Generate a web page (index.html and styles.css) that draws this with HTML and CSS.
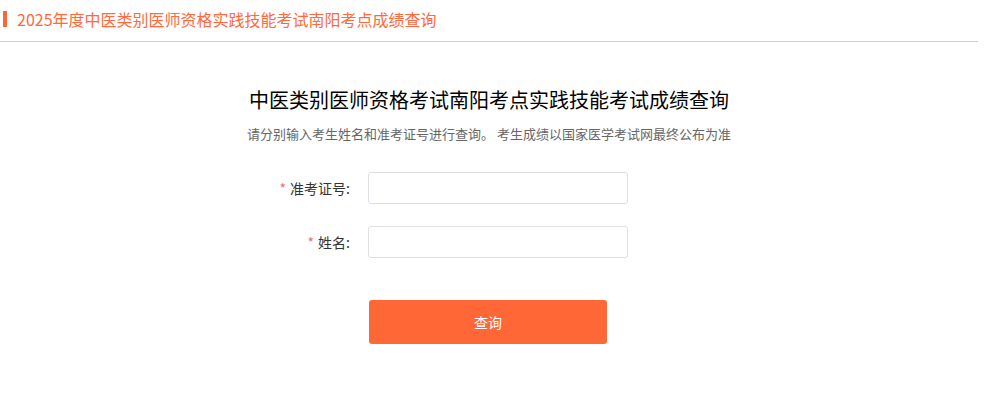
FILE: index.html
```html
<!DOCTYPE html>
<html lang="zh-CN">
<head>
<meta charset="utf-8">
<title>成绩查询</title>
<link rel="stylesheet" href="styles.css">
</head>
<body>
<div class="page">
  <header class="topbar">
    <span class="topbar-mark"></span>
    <h1 class="topbar-title">2025年度中医类别医师资格实践技能考试南阳考点成绩查询</h1>
  </header>
  <main class="main">
    <h2 class="heading">中医类别医师资格考试南阳考点实践技能考试成绩查询</h2>
    <p class="subtitle">请分别输入考生姓名和准考证号进行查询。 考生成绩以国家医学考试网最终公布为准</p>
    <form class="form">
      <div class="row">
        <label class="label"><span class="req">*</span>准考证号:</label>
        <input class="input" type="text">
      </div>
      <div class="row">
        <label class="label"><span class="req">*</span>姓名:</label>
        <input class="input" type="text">
      </div>
      <div class="actions">
        <button class="btn" type="button">查询</button>
      </div>
    </form>
  </main>
</div>
</body>
</html>
```
FILE: styles.css
```css
* { box-sizing: border-box; }
html, body { margin: 0; padding: 0; background: #fff; }
body {
  font-family: "Noto Sans CJK SC", "Liberation Sans", sans-serif;
  color: #333;
}
.page { width: 978px; }
.topbar {
  display: flex;
  align-items: center;
  height: 42px;
  border-bottom: 1px solid #d0d0d0;
  padding-bottom: 3px;
}
.topbar-mark {
  width: 4px;
  height: 16px;
  margin-left: 3px;
  background: #ff6633;
}
.topbar-title {
  margin: 0 0 0 10px;
  font-size: 16px;
  font-weight: normal;
  color: #ff6a3d;
  line-height: 20px;
}
.main { padding-top: 44px; }
.heading {
  margin: 0;
  text-align: center;
  font-size: 20px;
  font-weight: normal;
  color: #000;
  line-height: 28px;
}
.subtitle {
  margin: 11px 0 0;
  text-align: center;
  font-size: 13px;
  color: #666;
  line-height: 18px;
}
.form {
  width: 500px;
  margin: 29px auto 0;
}
.row {
  display: flex;
  align-items: center;
  margin-bottom: 22px;
}
.label {
  width: 129px;
  padding-right: 18px;
  text-align: right;
  font-size: 14px;
  color: #333;
}
.req { color: #f56c6c; margin-right: 4px; }
.input {
  width: 260px;
  height: 32px;
  border: 1px solid #dcdfe6;
  border-radius: 3px;
  outline: none;
  padding: 0 10px;
  font: inherit;
}
.actions { padding-top: 20px; padding-left: 130px; }
.btn {
  width: 238px;
  height: 44px;
  border: none;
  border-radius: 3px;
  background: #ff6736;
  color: #fff;
  font-family: inherit;
  font-size: 14px;
  cursor: pointer;
}
```
